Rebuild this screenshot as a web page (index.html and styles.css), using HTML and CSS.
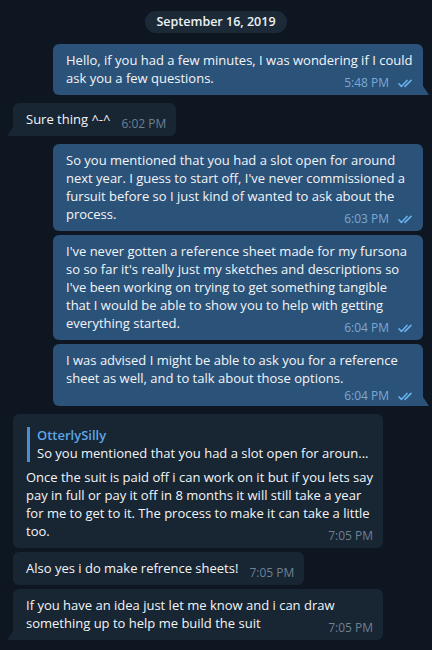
FILE: index.html
```html
<!DOCTYPE html>
<html lang="en">
<head>
<meta charset="utf-8">
<title>Chat</title>
<link rel="stylesheet" href="styles.css">
</head>
<body>
<div class="chat">
  <div class="date"><span class="date-pill">September 16, 2019</span></div>

  <div class="group out">
    <div class="msg tail"><p>Hello, if you had a few minutes, I was wondering if I could ask you a few questions.<span class="meta">5:48 PM<svg class="ticks" viewBox="0 0 17 9" width="17" height="9"><path d="M1 4.8 L3.4 7.4 L9 1.4 M7 7.4 L13 1.4" /></svg></span></p></div>
  </div>

  <div class="group in">
    <div class="msg tail"><p>Sure thing ^-^<span class="meta">6:02 PM</span></p></div>
  </div>

  <div class="group out">
    <div class="msg"><p>So you mentioned that you had a slot open for around next year. I guess to start off, I've never commissioned a fursuit before so I just kind of wanted to ask about the process.<span class="meta">6:03 PM<svg class="ticks" viewBox="0 0 17 9" width="17" height="9"><path d="M1 4.8 L3.4 7.4 L9 1.4 M7 7.4 L13 1.4" /></svg></span></p></div>
    <div class="msg"><p>I've never gotten a reference sheet made for my fursona so so far it's really just my sketches and descriptions so I've been working on trying to get something tangible that I would be able to show you to help with getting everything started.<span class="meta">6:04 PM<svg class="ticks" viewBox="0 0 17 9" width="17" height="9"><path d="M1 4.8 L3.4 7.4 L9 1.4 M7 7.4 L13 1.4" /></svg></span></p></div>
    <div class="msg tail"><p>I was advised I might be able to ask you for a reference sheet as well, and to talk about those options.<span class="meta meta-below">6:04 PM<svg class="ticks" viewBox="0 0 17 9" width="17" height="9"><path d="M1 4.8 L3.4 7.4 L9 1.4 M7 7.4 L13 1.4" /></svg></span></p></div>
  </div>

  <div class="group in">
    <div class="msg">
      <div class="reply">
        <div class="reply-name">OtterlySilly</div>
        <div class="reply-text">So you mentioned that you had a slot open for aroun...</div>
      </div>
      <p>Once the suit is paid off i can work on it but if you lets say pay in full or pay it off in 8 months it will still take a year for me to get to it. The process to make it can take a little too.<span class="meta">7:05 PM</span></p>
    </div>
    <div class="msg"><p>Also yes i do make refrence sheets!<span class="meta">7:05 PM</span></p></div>
    <div class="msg tail"><p>If you have an idea just let me know and i can draw something up to help me build the suit<span class="meta">7:05 PM</span></p></div>
  </div>
</div>
</body>
</html>
```

FILE: styles.css
```css
html, body {
  margin: 0;
  padding: 0;
  background: #0e1621;
}

body {
  font-family: "Open Sans", "Noto Sans", sans-serif;
  font-size: 13px;
  line-height: 18px;
  color: #f3f5f8;
  overflow: hidden;
}

.chat {
  padding-top: 11px;
  display: flex;
  flex-direction: column;
  gap: 8px;
}

.date {
  display: flex;
  justify-content: center;
  margin-bottom: 3px;
}

.date-pill {
  background: #1c2a38;
  color: #eef2f6;
  font-weight: 600;
  font-size: 12.5px;
  line-height: 22px;
  height: 22px;
  padding: 0 11px;
  border-radius: 11px;
}

.group {
  display: flex;
  flex-direction: column;
  gap: 4px;
}

.msg {
  position: relative;
  display: flow-root;
  max-width: 370px;
  box-sizing: border-box;
  padding: 7px 10px 8px 13px;
  border-radius: 6px;
}

.msg p {
  margin: 0;
}

.out .msg {
  align-self: flex-end;
  margin-right: 9px;
  background: #2b5278;
  width: 370px;
}

.in .msg {
  align-self: flex-start;
  margin-left: 13px;
  padding-right: 6px;
  background: #182533;
  width: fit-content;
}

.out .msg.tail {
  border-bottom-right-radius: 0;
}

.in .msg.tail {
  border-bottom-left-radius: 0;
}

.msg.tail::after {
  content: "";
  position: absolute;
  bottom: 0;
  width: 6px;
  height: 9px;
}

.out .msg.tail::after {
  right: -6px;
  background: #2b5278;
  clip-path: polygon(0 0, 0 100%, 100% 100%);
}

.in .msg.tail::after {
  left: -6px;
  background: #182533;
  clip-path: polygon(100% 0, 100% 100%, 0 100%);
}

.meta {
  float: right;
  display: flex;
  align-items: center;
  margin: 8px 0 -4px 11px;
  font-size: 12px;
  line-height: 12px;
  white-space: nowrap;
}

.out .meta {
  color: #7da8d3;
}

.in .meta {
  color: #6d8193;
  margin-right: 4px;
}

.meta-below {
  float: none;
  justify-content: flex-end;
  margin: 3px 0 -4px 0;
}

.ticks {
  margin-left: 9px;
  margin-right: -2px;
  fill: none;
  stroke: #6ab4f2;
  stroke-width: 1.5;
  stroke-linecap: round;
  stroke-linejoin: round;
}

.reply {
  margin: 6px 0 6px 1px;
  padding-left: 7px;
  border-left: 3px solid #4a8fd0;
  line-height: 17.5px;
}

.reply-name {
  color: #5da5e8;
  font-weight: 600;
}

.reply-text {
  white-space: nowrap;
  overflow: hidden;
}
```
